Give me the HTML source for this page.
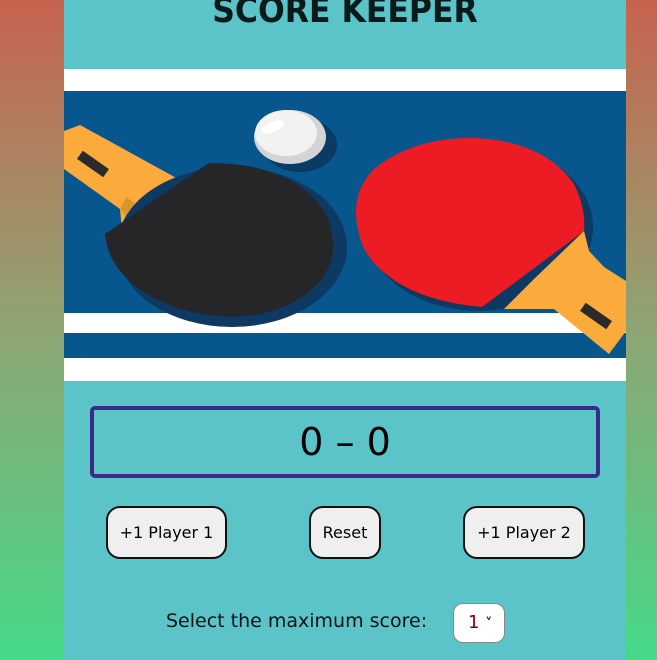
<!DOCTYPE html>
<html><head><style>
body{margin:0;width:657px;height:660px;overflow:hidden;background:linear-gradient(#c7634f,#8ea573 50%,#45d98a);font-family:"DejaVu Sans","Liberation Sans",sans-serif;}
.c{position:absolute;left:64px;top:0;width:562px;height:660px;background:#5bc4c9;}
h1{position:absolute;left:0;width:562px;top:-9px;margin:0;text-align:center;font-size:35px;font-weight:bold;font-family:"DejaVu Sans Condensed","DejaVu Sans",sans-serif;font-stretch:condensed;color:#0a1a1a;}
.score{position:absolute;left:26px;top:406px;width:502px;height:64px;border:4px solid #3b2a8a;border-radius:5px;text-align:center;font-size:38px;line-height:64px;color:#000;}
.b{position:absolute;top:506px;border:2px solid #111;border-radius:14px;background:#efefef;font-size:16px;line-height:49px;text-align:center;box-sizing:border-box;height:53px;}
.lbl{position:absolute;left:102px;top:610px;font-size:19px;color:#111;}
.sel{position:absolute;left:389px;top:603px;width:52px;height:40px;box-sizing:border-box;border:1px solid #888;border-radius:10px;background:#fff;font-size:18px;line-height:38px;padding-left:14px;color:#222;}
</style></head><body>
<div class="c">
<h1>SCORE KEEPER</h1>
<svg style="position:absolute;left:0;top:69px" width="562" height="312" viewBox="0 0 562 312">
<rect width="562" height="312" fill="#fff"/>
<rect y="22" width="562" height="222" fill="#08568e"/>
<rect y="264" width="562" height="25" fill="#08568e"/>
<!-- ball -->
<ellipse cx="236" cy="76" rx="37" ry="27" fill="#0b3a64"/>
<ellipse cx="226" cy="68" rx="36" ry="27" fill="#d3d4d6"/>
<ellipse cx="222" cy="64" rx="31" ry="23" fill="#f2f2f2"/>
<ellipse cx="209" cy="58" rx="12" ry="5" fill="#fff" transform="rotate(-25 209 58)"/>
<!-- black paddle -->
<polygon points="0,62 16,56 116,111 140,120 80,170 58,160 56,140 0,100" fill="#fbab3c"/>
<polygon points="56,140 80,170 100,155 62,128" fill="#d9962f"/>
<rect x="13" y="90" width="32" height="10" fill="#2a2a2a" transform="rotate(35 29 95)"/>
<ellipse cx="168" cy="178" rx="115" ry="80" fill="#0d3962"/>
<path d="M145,94 Q230,94 262,145 Q285,200 232,232 Q180,260 110,238 Q45,212 41,165 Z" fill="#262528"/>
<!-- red paddle -->
<ellipse cx="415" cy="158" rx="114" ry="84" fill="#0d3962"/>
<polygon points="470,210 520,162 525,182 540,198 562,212 562,262 545,285 490,240 440,240" fill="#fbab3c"/>
<rect x="516" y="242" width="32" height="10" fill="#2a2a2a" transform="rotate(35 532 247)"/>
<path d="M520,162 L418,238 Q330,230 300,180 Q280,130 310,100 Q350,68 410,69 Q480,72 510,115 Q522,140 520,162Z" fill="#ed1c24"/>
</svg>
<div class="score">0 – 0</div>
<div class="b" style="left:42px;width:121px">+1 Player 1</div>
<div class="b" style="left:245px;width:72px">Reset</div>
<div class="b" style="left:399px;width:122px">+1 Player 2</div>
<div class="lbl">Select the maximum score:</div>
<div class="sel"><span style="color:#800">1</span> <span style="font-size:14px;font-weight:bold">&#709;</span></div>
</div>
</body></html>
